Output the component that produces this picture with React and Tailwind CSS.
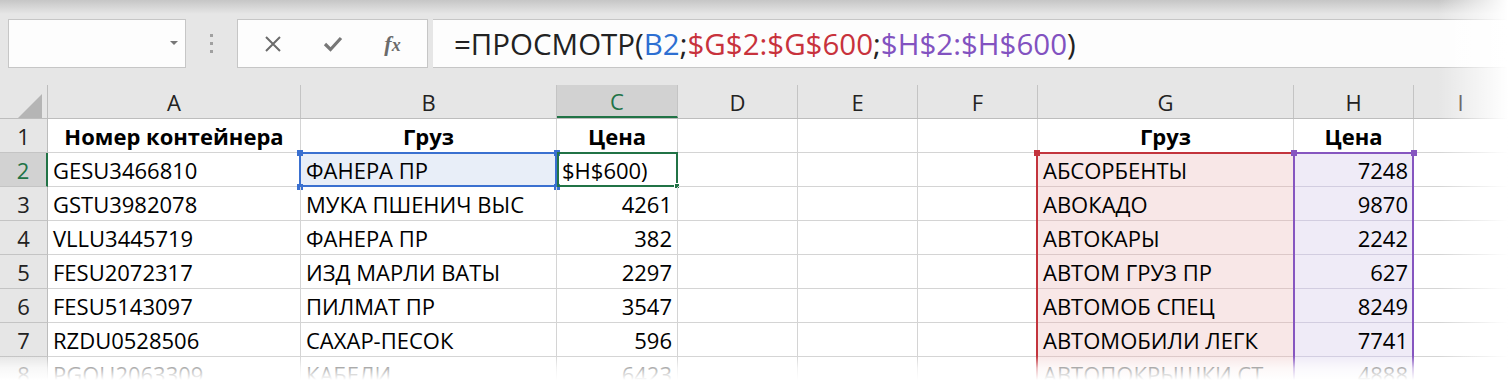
import React from 'react';

const cols = [
  { key: 'A', w: 'w-[253px]' },
  { key: 'B', w: 'w-[256px]' },
  { key: 'C', w: 'w-[121px]' },
  { key: 'D', w: 'w-[120px]' },
  { key: 'E', w: 'w-[120px]' },
  { key: 'F', w: 'w-[120px]' },
  { key: 'G', w: 'w-[256px]' },
  { key: 'H', w: 'w-[120px]' },
  { key: 'I', w: 'flex-1' },
];

const rows = [
  ['GESU3466810', 'ФАНЕРА ПР', '$H$600)', 'АБСОРБЕНТЫ', '7248'],
  ['GSTU3982078', 'МУКА ПШЕНИЧ ВЫС', '4261', 'АВОКАДО', '9870'],
  ['VLLU3445719', 'ФАНЕРА ПР', '382', 'АВТОКАРЫ', '2242'],
  ['FESU2072317', 'ИЗД МАРЛИ ВАТЫ', '2297', 'АВТОМ ГРУЗ ПР', '627'],
  ['FESU5143097', 'ПИЛМАТ ПР', '3547', 'АВТОМОБ СПЕЦ', '8249'],
  ['RZDU0528506', 'САХАР-ПЕСОК', '596', 'АВТОМОБИЛИ ЛЕГК', '7741'],
  ['PGOU2063309', 'КАБЕЛИ', '6423', 'АВТОПОКРЫШКИ СТ', '4888'],
];

const Cell = ({ w, children, className = '' }) => (
  <div className={`${w} h-[34px] shrink-0 border-r border-b border-[#d4d4d4] relative flex items-center px-[5px] pt-[2px] ${className}`}>
    {children}
  </div>
);

const Handle = ({ className }) => <div className={`absolute w-[6px] h-[6px] ${className}`} />;

const FormulaBar = () => (
  <div className="h-[85px] bg-[linear-gradient(to_bottom,#c6c6c6_0px,#e6e6e6_14px)] flex items-start pt-[19px]">
    <div className="ml-[8px] w-[178px] h-[49px] bg-[#fdfdfd] border border-[#c6c6c6] relative">
      <div className="absolute left-[161px] top-[21px] w-0 h-0 border-l-[4px] border-r-[4px] border-t-[4px] border-l-transparent border-r-transparent border-t-[#777]" />
    </div>
    <div className="w-[51px] h-[49px] flex flex-col items-center justify-center gap-[5px]">
      <div className="w-[3px] h-[3px] bg-[#a0a0a0]" />
      <div className="w-[3px] h-[3px] bg-[#a0a0a0]" />
      <div className="w-[3px] h-[3px] bg-[#a0a0a0]" />
    </div>
    <div className="w-[191px] h-[49px] bg-[#fdfdfd] border border-[#c6c6c6] flex items-center">
      <div className="w-[66px] flex justify-center pl-[4px]">
        <svg width="18" height="18" viewBox="0 0 18 18">
          <path d="M2 2L16 16M16 2L2 16" stroke="#6b6b6b" strokeWidth="2" />
        </svg>
      </div>
      <div className="w-[58px] flex justify-center">
        <svg width="20" height="18" viewBox="0 0 20 18">
          <path d="M2 9L7.5 14.5L18 3" stroke="#777" strokeWidth="3.2" fill="none" />
        </svg>
      </div>
      <div className="flex-1 flex items-baseline justify-center pr-[4px] text-[#6b6b6b] italic font-bold font-['Liberation_Serif',serif] leading-none">
        <span className="text-[22px]">f</span>
        <span className="text-[18px]">x</span>
      </div>
    </div>
    <div className="ml-[5px] flex-1 h-[49px] bg-[#fdfdfd] border-y border-[#c6c6c6] flex items-center pl-[21px] text-[29.5px] text-[#222] leading-none whitespace-nowrap">
      <span>=ПРОСМОТР(</span>
      <span className="text-[#2d6fd2]">B2</span>
      <span>;</span>
      <span className="text-[#c8323c]">$G$2:$G$600</span>
      <span>;</span>
      <span className="text-[#8252c0]">$H$2:$H$600</span>
      <span>)</span>
    </div>
  </div>
);

const HeaderRow = () => (
  <div className="flex h-[34px] bg-[#e6e6e6] border-b border-[#bdbdbd]">
    <div className="w-[48px] shrink-0 border-r border-[#bdbdbd] relative">
      <div className="absolute left-[18px] top-[9px] w-0 h-0 border-b-[24px] border-l-[24px] border-l-transparent border-b-[#b5b5b5]" />
    </div>
    {cols.map((c) => (
      <div
        key={c.key}
        className={`${c.w} shrink-0 flex items-center justify-center pt-[2px] border-r border-[#c4c4c4] text-[22px] ${
          c.key === 'C' ? 'bg-[#d2d2d2] text-[#217346] border-b-2 border-b-[#217346]' : 'text-[#222]'
        }`}
      >
        {c.key}
      </div>
    ))}
  </div>
);

const RowHead = ({ n }) => (
  <div
    className={`w-[48px] h-[34px] shrink-0 flex items-center justify-center pt-[2px] border-b border-[#c4c4c4] text-[22px] ${
      n === 2 ? 'bg-[#d2d2d2] text-[#217346] border-r-2 border-r-[#217346]' : 'bg-[#e6e6e6] text-[#222] border-r border-r-[#bdbdbd]'
    }`}
  >
    {n}
  </div>
);

export default function App() {
  return (
    <div className="w-[1508px] h-[380px] relative overflow-hidden bg-white font-['Open_Sans',sans-serif] text-black">
      <FormulaBar />
      <HeaderRow />

      <div className="flex text-[22px]">
        <RowHead n={1} />
        <Cell w="w-[253px]" className="justify-center font-bold">Номер контейнера</Cell>
        <Cell w="w-[256px]" className="justify-center font-bold">Груз</Cell>
        <Cell w="w-[121px]" className="justify-center font-bold">Цена</Cell>
        <Cell w="w-[120px]" />
        <Cell w="w-[120px]" />
        <Cell w="w-[120px]" />
        <Cell w="w-[256px]" className="justify-center font-bold">Груз</Cell>
        <Cell w="w-[120px]" className="justify-center font-bold">Цена</Cell>
        <Cell w="flex-1" />
      </div>

      {rows.map((r, i) => {
        const n = i + 2;
        const first = i === 0;
        return (
          <div key={n} className="flex text-[22px]">
            <RowHead n={n} />
            <Cell w="w-[253px]">{r[0]}</Cell>
            <Cell w="w-[256px]" className={first ? 'bg-[#e8eef8]' : ''}>
              {r[1]}
              {first && (
                <>
                  <div className="absolute -left-[2px] -top-[1px] -right-[1px] -bottom-[1px] border-2 border-[#3a70d0]" />
                  <Handle className="-left-[4px] -top-[3px] bg-[#3a70d0]" />
                  <Handle className="-right-[4px] -top-[3px] bg-[#3a70d0]" />
                  <Handle className="-left-[4px] -bottom-[4px] bg-[#3a70d0]" />
                  <Handle className="-right-[4px] -bottom-[4px] bg-[#3a70d0]" />
                </>
              )}
            </Cell>
            <Cell w="w-[121px]" className={first ? 'justify-start' : 'justify-end'}>
              {r[2]}
              {first && (
                <>
                  <div className="absolute left-0 -top-[1px] -right-[1px] -bottom-[1px] border-2 border-[#217346]" />
                  <div className="absolute -right-[3px] -bottom-[3px] w-[6px] h-[6px] bg-[#217346] border border-white" />
                </>
              )}
            </Cell>
            <Cell w="w-[120px]" />
            <Cell w="w-[120px]" />
            <Cell w="w-[120px]" />
            <Cell w="w-[256px]" className="bg-[#f8e7e7] border-b-[#dcc8c8]">
              {r[3]}
              <div className={`absolute -left-[2px] -right-[2px] -bottom-[1px] ${first ? '-top-[1px] border-t-2' : '-top-0'} border-x-2 border-[#c3343d]`} />
              {first && <Handle className="-left-[4px] -top-[3px] bg-[#c3343d]" />}
            </Cell>
            <Cell w="w-[120px]" className="justify-end bg-[#efebf7] border-b-[#d2cde0]">
              {r[4]}
              <div className={`absolute -left-[1px] -right-[1px] -bottom-[1px] ${first ? '-top-[1px] border-t-2' : '-top-0'} border-x-2 border-[#8656c0]`} />
              {first && (
                <>
                  <Handle className="-left-[3px] -top-[3px] bg-[#8656c0]" />
                  <Handle className="-right-[4px] -top-[3px] bg-[#8656c0]" />
                </>
              )}
            </Cell>
            <Cell w="flex-1" />
          </div>
        );
      })}

      <div className="absolute right-0 top-0 h-full w-[70px] bg-gradient-to-r from-white/0 to-white" />
      <div className="absolute left-0 bottom-0 w-full h-[24px] bg-gradient-to-b from-white/0 via-white/70 to-white" />
    </div>
  );
}
